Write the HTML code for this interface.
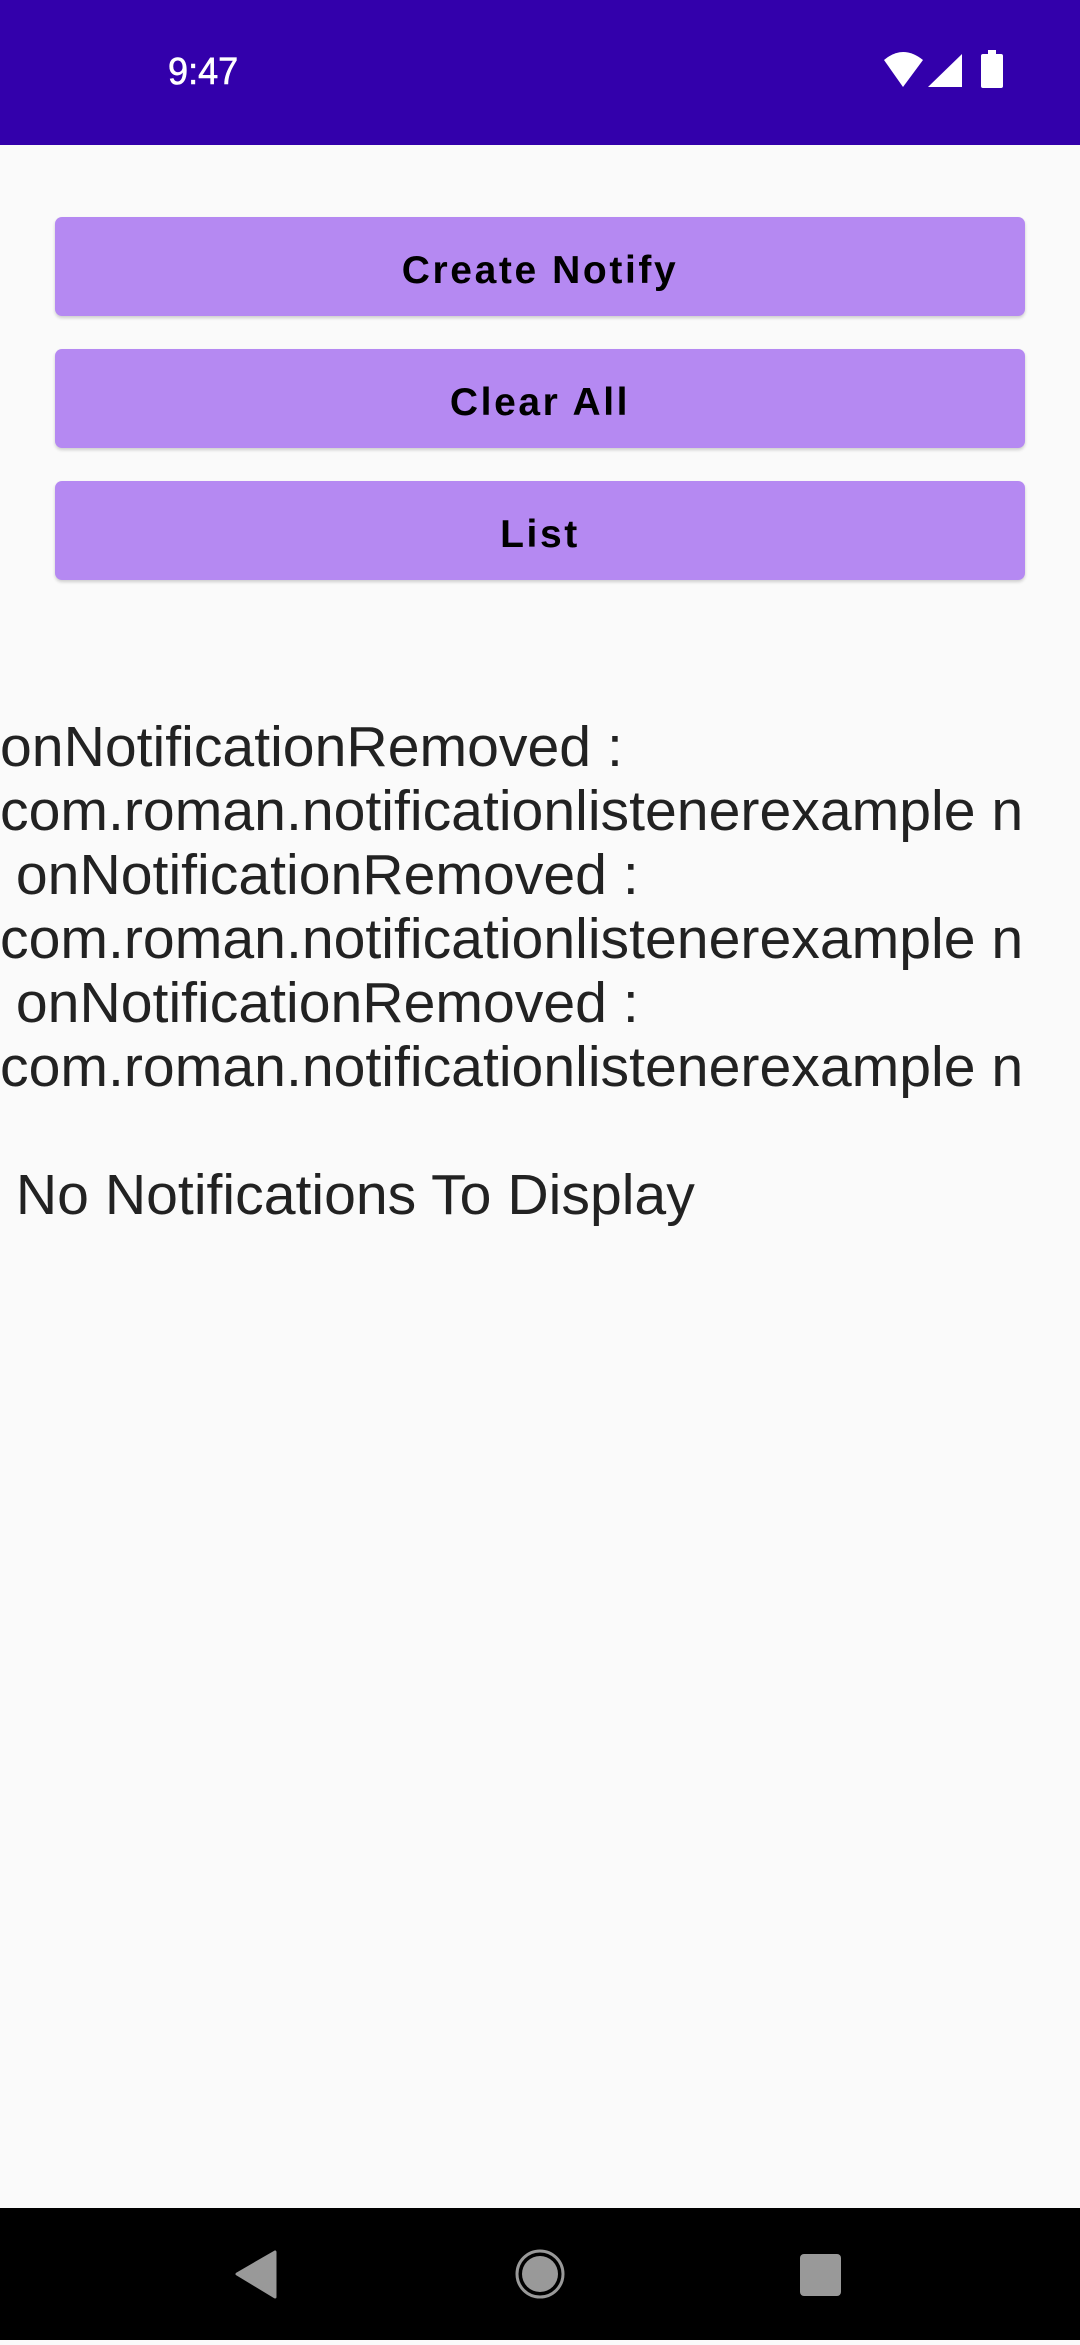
<!DOCTYPE html>
<html><head><meta charset="utf-8"><style>
html,body{margin:0;padding:0;}
body{width:1080px;height:2340px;background:#fafafa;position:relative;overflow:hidden;font-family:"Liberation Sans",sans-serif;}
.sb{position:absolute;left:0;top:0;width:1080px;height:145px;background:#3300ab;}
.time{position:absolute;left:168px;top:50px;color:#fff;font-size:38px;line-height:44px;transform:scaleX(0.95);transform-origin:0 0;-webkit-text-stroke:0.6px #fff;}
.btn{position:absolute;left:55px;width:970px;height:99px;background:#b589f2;border-radius:7px;box-shadow:0 2px 3px rgba(0,0,0,0.18);color:#000;font-weight:bold;font-size:39px;letter-spacing:2.6px;text-align:center;line-height:99px;}
.btn span{position:relative;top:4px;}
.txt{position:absolute;left:0;top:715px;color:#222;font-size:57px;line-height:64px;white-space:pre;}
.txt div{transform:scaleX(1.003);transform-origin:0 0;}
.nav{position:absolute;left:0;top:2208px;width:1080px;height:132px;background:#000;}
</style></head><body>
<div class="sb">
<div class="time">9:47</div>
<svg style="position:absolute;left:0;top:0" width="1080" height="145">
<path d="M884 60 Q903 44 923 60 L903 87 Z" fill="#fff"/>
<path d="M962 54 L962 87 L928 87 Z" fill="#fff"/>
<rect x="988" y="50" width="8" height="5" fill="#fff"/>
<rect x="981" y="54" width="22" height="34" rx="2" fill="#fff"/>
</svg>
</div>
<div class="btn" style="top:217px"><span>Create Notify</span></div>
<div class="btn" style="top:349px"><span>Clear All</span></div>
<div class="btn" style="top:481px"><span>List</span></div>
<div class="txt"><div>onNotificationRemoved :</div><div>com.roman.notificationlistenerexample n</div><div> onNotificationRemoved :</div><div>com.roman.notificationlistenerexample n</div><div> onNotificationRemoved :</div><div>com.roman.notificationlistenerexample n</div><div> </div><div> No Notifications To Display</div></div>
<div class="nav">
<svg width="1080" height="132">
<path d="M275 44 L275 89 L237 66 Z" fill="#999" stroke="#999" stroke-width="3" stroke-linejoin="round"/>
<circle cx="540" cy="66" r="23" fill="none" stroke="#999" stroke-width="3"/>
<circle cx="540" cy="66" r="18" fill="#999"/>
<rect x="800" y="46" width="41" height="42" rx="4" fill="#999"/>
</svg>
</div>
</body></html>
